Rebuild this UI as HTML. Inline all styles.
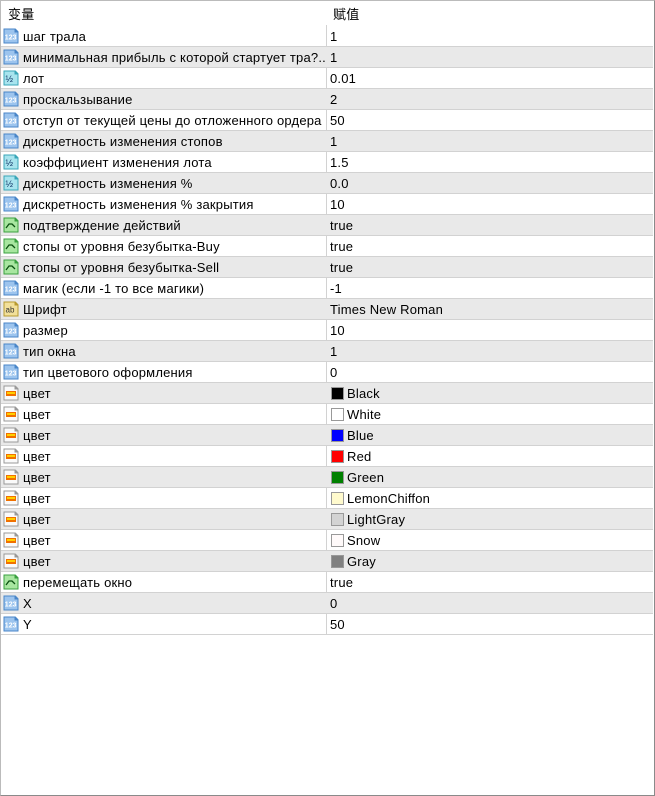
<!DOCTYPE html>
<html><head><meta charset="utf-8"><style>
*{margin:0;padding:0;box-sizing:border-box}
body{width:655px;height:796px;background:#fff;font-family:"Liberation Sans","Noto Sans CJK SC",sans-serif;font-size:13px;letter-spacing:0.2px;color:#000;position:relative;overflow:hidden}
#frame{position:absolute;left:0;top:0;width:655px;height:796px;border:1px solid #8a8a8a;border-top-color:#bbb;border-left-color:#bbb}
.hdr{position:absolute;top:4px;font-size:13px}
.row{position:absolute;left:1px;width:652px;height:21px;border-bottom:1px solid #d2d2d2}
.row.g{background:#e9e9e9}
.row .n{position:absolute;left:22px;top:3px;white-space:nowrap}
.row .v{position:absolute;left:329px;top:3px;white-space:nowrap}
.row svg{position:absolute;left:2px;top:2px}
.sw{position:absolute;left:330px;top:4px;width:13px;height:13px;border:1px solid #999}
.row .v2{left:346px}
#div{position:absolute;left:326px;top:25px;width:1px;height:610px;background:#d2d2d2}
</style></head><body>
<div id="frame"></div>
<div class="hdr" style="left:8px">变量</div>
<div class="hdr" style="left:333px">赋值</div>
<div id="div"></div>
<div id="rows"></div>
<script>
const S={
i123:'<path d="M0.5 0.5h12l3 3v12H0.5z" fill="#4a86c8"/><path d="M1.5 1.5h10v3h3v10H1.5z" fill="#9cc4ee"/><text x="1.8" y="11.5" font-size="7" font-family="Liberation Sans" fill="#fff" font-weight="bold" letter-spacing="0">123</text>',
ihalf:'<path d="M0.5 0.5h12l3 3v12H0.5z" fill="#3aa6b8"/><path d="M1.5 1.5h10v3h3v10H1.5z" fill="#a8e4ee"/><text x="2.5" y="12" font-size="9" font-family="Liberation Sans" fill="#136" letter-spacing="0">½</text>',
ibool:'<path d="M0.5 0.5h12l3 3v12H0.5z" fill="#3aa040"/><path d="M1.5 1.5h10v3h3v10H1.5z" fill="#a8e6a0"/><path d="M3 11l3-4h3l3 3" stroke="#0a5010" fill="none" stroke-width="1.3"/>',
iab:'<path d="M0.5 0.5h12l3 3v12H0.5z" fill="#b89a30"/><path d="M1.5 1.5h10v3h3v10H1.5z" fill="#f2e09a"/><text x="2.5" y="11.5" font-size="8" font-family="Liberation Sans" fill="#333" letter-spacing="0">ab</text>',
icol:'<path d="M0.5 0.5h12l3 3v12H0.5z" fill="#999"/><path d="M1.5 1.5h10v3h3v10H1.5z" fill="#fafafa"/><rect x="3" y="6" width="10" height="5" fill="#f07000"/><rect x="4" y="7" width="8" height="2" fill="#ffd000"/>'};
const R=[["i123","шаг трала","1"],["i123","минимальная прибыль с которой стартует тра?..","1"],["ihalf","лот","0.01"],["i123","проскальзывание","2"],["i123","отступ от текущей цены до отложенного ордера","50"],["i123","дискретность изменения стопов","1"],["ihalf","коэффициент изменения лота","1.5"],["ihalf","дискретность изменения %","0.0"],["i123","дискретность изменения % закрытия","10"],["ibool","подтверждение действий","true"],["ibool","стопы от уровня безубытка-Buy","true"],["ibool","стопы от уровня безубытка-Sell","true"],["i123","магик (если -1 то все магики)","-1"],["iab","Шрифт","Times New Roman"],["i123","размер","10"],["i123","тип окна","1"],["i123","тип цветового оформления","0"],["icol","цвет","Black","#000"],["icol","цвет","White","#fff"],["icol","цвет","Blue","#0000ff"],["icol","цвет","Red","#ff0000"],["icol","цвет","Green","#008000"],["icol","цвет","LemonChiffon","#fffacd"],["icol","цвет","LightGray","#d3d3d3"],["icol","цвет","Snow","#fffafa"],["icol","цвет","Gray","#808080"],["ibool","перемещать окно","true"],["i123","X","0"],["i123","Y","50"]];
let h="";R.forEach((r,i)=>{h+=`<div class="row${i%2?' g':''}" style="top:${26+21*i}px"><svg width="16" height="16" viewBox="0 0 16 16">${S[r[0]]}</svg><span class="n">${r[1]}</span>`+(r[3]?`<span class="sw" style="background:${r[3]}"></span><span class="v v2">${r[2]}</span>`:`<span class="v">${r[2]}</span>`)+`</div>`});
document.getElementById("rows").innerHTML=h;
</script>
</body></html>
